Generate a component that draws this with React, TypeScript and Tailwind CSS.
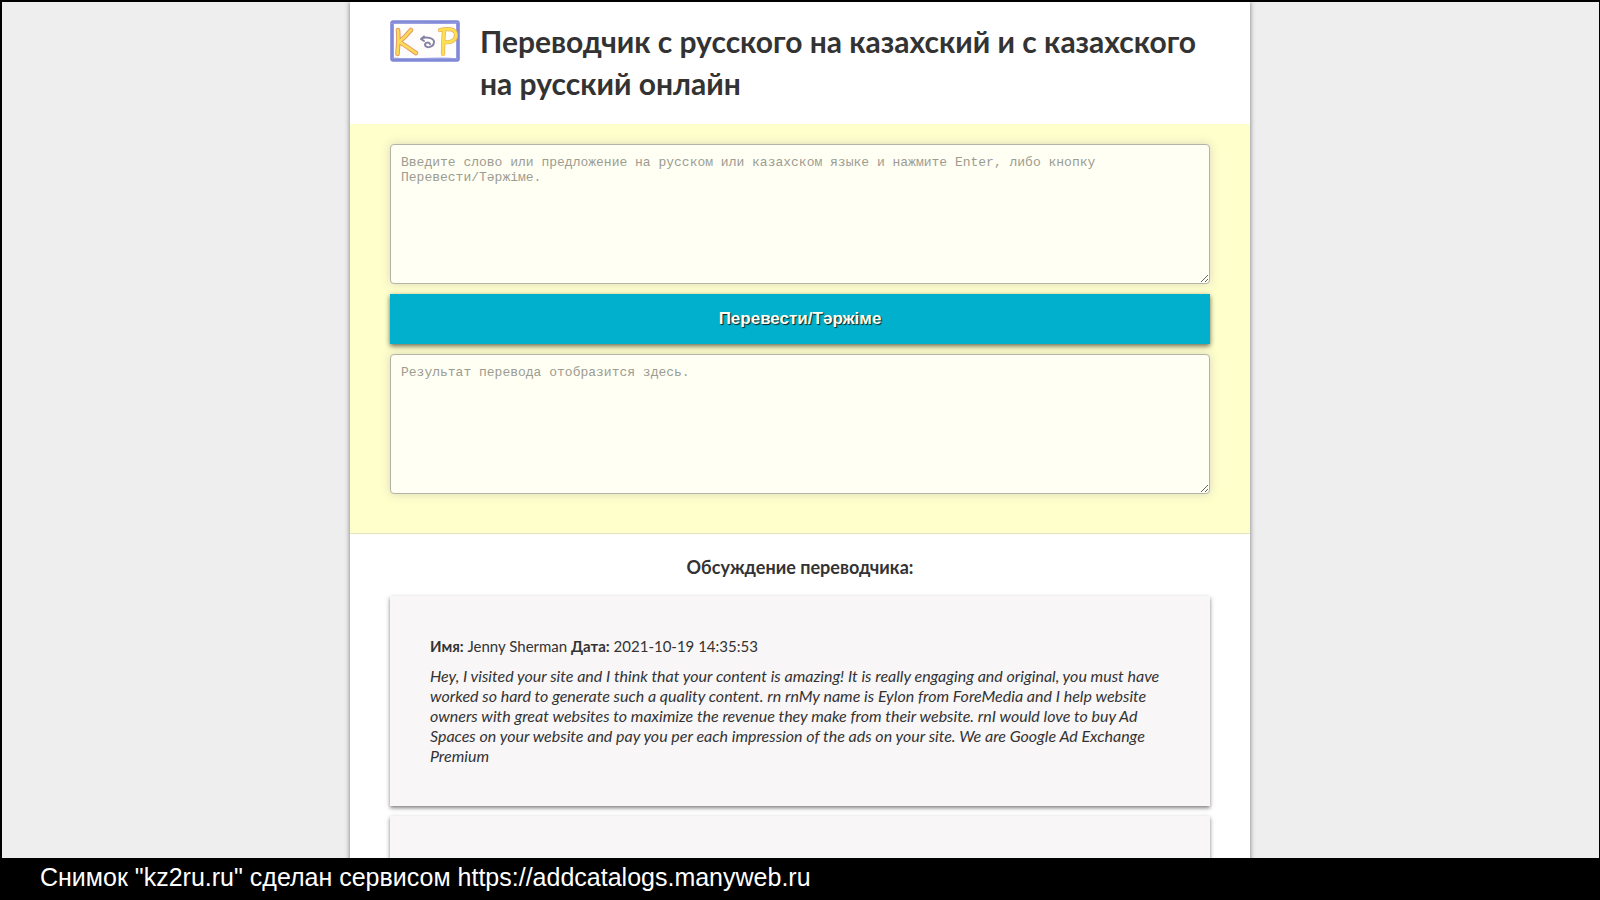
import React from "react";

type Comment = { name: string; date: string; text: string };

const comments: Comment[] = [
  {
    name: "Jenny Sherman",
    date: "2021-10-19 14:35:53",
    text:
      "Hey, I visited your site and I think that your content is amazing! It is really engaging and original, you must have worked so hard to generate such a quality content. rn rnMy name is Eylon from ForeMedia and I help website owners with great websites to maximize the revenue they make from their website. rnI would love to buy Ad Spaces on your website and pay you per each impression of the ads on your site. We are Google Ad Exchange Premium",
  },
];

const cardClass = "bg-[#f8f6f7] p-10 shadow-[0_2px_4px_rgba(0,0,0,0.5)]";

const areaClass =
  "block h-[140px] w-full resize-y rounded-[4px] border border-[#b4b4a8] bg-[#fffff3] p-[10px] font-['Liberation_Mono',monospace] text-[13px] leading-[15px] text-[#333] shadow-[0_0_10px_rgba(100,100,140,0.25)] outline-none placeholder:text-[#9c9c92]";

function Logo() {
  return (
    <svg viewBox="0 0 70 42" className="h-[42px] w-[70px] shrink-0" role="img" aria-label="kz2ru">
      <rect x="2" y="2" width="66" height="38" rx="1" fill="#fffdfb" stroke="#8088d8" strokeWidth="3.600" />
      <path d="M1 3.500C20 2 45 4.500 69 2.500M2 38C25 40 50 36.500 68 39" fill="none" stroke="#979de2" strokeWidth="1" />
      <g fill="none" strokeLinecap="round" strokeLinejoin="round">
        <path d="M8 10C9 18 8 26 7.500 34M21 10C17 15 14 18 9 22C15 25 20 29 26 33" stroke="#e79a68" strokeWidth="4.600" />
        <path d="M8 10C9 18 8 26 7.500 34M21 10C17 15 14 18 9 22C15 25 20 29 26 33" stroke="#fbdc55" strokeWidth="2.600" />
        <path d="M53 34C53 25 53.500 17 54 10M50 10C59 8 66 9 66 15C66 21 60 23 54 22" stroke="#efad58" strokeWidth="4.200" />
        <path d="M53 34C53 25 53.500 17 54 10M50 10C59 8 66 9 66 15C66 21 60 23 54 22" stroke="#fbe052" strokeWidth="2.800" />
        <path d="M31 19C36 16 44 18 44 22C44 27 36 29 35 25C35 22 39 22 40 24M31 19L34 16.500M31 19L34 21" stroke="#8582a5" strokeWidth="2" />
      </g>
    </svg>
  );
}

export default function App() {
  return (
    <div className="flex h-screen flex-col overflow-hidden bg-black font-['Lato','Open_Sans',sans-serif] text-[#333]">
      <div className="mt-[2px] mr-px ml-[2px] min-h-0 flex-1 overflow-hidden bg-[#eee] pr-px">
        <main className="mx-auto min-h-full w-full max-w-[900px] bg-white shadow-[0_0_5px_rgba(0,0,0,0.5)]">
          <header className="flex items-start gap-5 px-10 pt-[18px] pb-5">
            <Logo />
            <h1 className="text-[30px] leading-[42px] font-bold">
              Переводчик с русского на казахский и с казахского на русский онлайн
            </h1>
          </header>

          <form
            className="flex flex-col gap-[10px] border-b border-[#e2e2c0] bg-[#ffffcc] px-10 pt-5 pb-[39px]"
            onSubmit={(e) => e.preventDefault()}
          >
            <textarea
              className={areaClass}
              aria-label="Текст для перевода"
              placeholder={
                "Введите слово или предложение на русском или казахском языке и нажмите Enter, либо кнопку\nПеревести/Тәржіме."
              }
            />
            <button
              type="submit"
              className="relative h-[50px] w-full bg-[#00b0cc] font-['Liberation_Sans',sans-serif] text-[17px] font-bold text-[#fffff0] shadow-[0_2px_5px_rgba(0,0,0,0.6)] [text-shadow:1px_1px_1px_rgba(0,0,0,0.8)]"
            >
              Перевести/Тәржіме
            </button>
            <textarea
              className={areaClass}
              aria-label="Результат перевода"
              placeholder="Результат перевода отобразится здесь."
            />
          </form>

          <section className="flex flex-col gap-[10px] px-10 pt-5">
            <h2 className="mb-[6px] text-center text-lg leading-[26px] font-bold">Обсуждение переводчика:</h2>
            {comments.map((c) => (
              <article key={c.date} className={cardClass}>
                <p className="mb-[10px] text-[15px] leading-5">
                  <b>Имя:</b> {c.name} <b>Дата:</b> {c.date}
                </p>
                <p className="text-base leading-5 italic">{c.text}</p>
              </article>
            ))}
            <article className={`${cardClass} min-h-[210px]`} />
          </section>
        </main>
      </div>
      <footer className="px-10 pt-[5px] pb-[9px] font-['Liberation_Sans',sans-serif] text-[25px] leading-7 text-white">
        Снимок "kz2ru.ru" сделан сервисом https://addcatalogs.manyweb.ru
      </footer>
    </div>
  );
}
